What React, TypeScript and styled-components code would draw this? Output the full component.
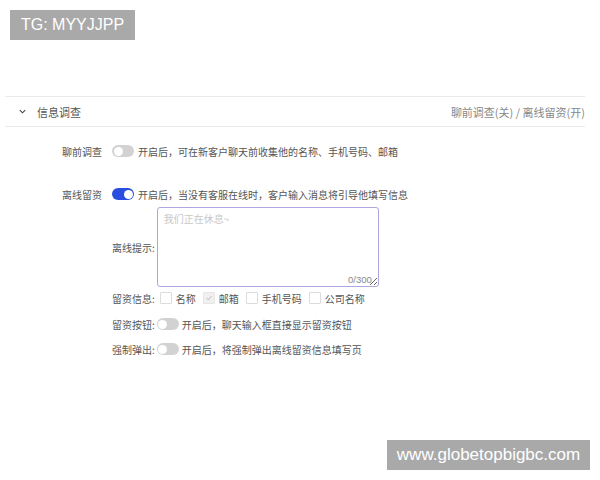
import React from 'react';
import styled, { createGlobalStyle } from 'styled-components';

const GlobalStyle = createGlobalStyle`
  html, body {
    margin: 0;
    padding: 0;
    background: #ffffff;
  }
  body {
    font-family: "Noto Sans CJK SC", "Noto Sans", sans-serif;
    color: #555;
  }
`;

const Page = styled.div`
  position: relative;
  width: 600px;
  height: 480px;
  overflow: hidden;
  padding-top: 96px;
  box-sizing: border-box;
`;

// watermark badges lie over the page
const Stamp = styled.div<{ $corner: 'top' | 'bottom' }>`
  position: absolute;
  ${(p) => (p.$corner === 'top'
    ? 'left: 10px; top: 10px; width: 125px; font-size: 16px;'
    : 'left: 387px; top: 440px; width: 203px; font-size: 17px;')}
  height: 30px;
  background: #a9a9a9;
  color: #fff;
  font-family: "Liberation Sans", Arial, sans-serif;
  line-height: 30px;
  text-align: center;
`;

const Section = styled.section`
  margin-left: 5px;
  width: 580px;
`;

const Header = styled.div`
  display: flex;
  align-items: center;
  height: 29px;
  border-top: 1px solid #ebebeb;
  border-bottom: 1px solid #ebebeb;
  padding-left: 13px;
`;

const Chevron = styled.svg`
  width: 9px;
  height: 9px;
  margin-right: 10px;
`;

const Title = styled.span`
  font-size: 11px;
  color: #555;
  flex: 1;
`;

const Summary = styled.span`
  font-size: 11px;
  color: #888;
`;

const Form = styled.div`
  padding-top: 14px;
`;

const Row = styled.div<{ $gap?: number }>`
  display: flex;
  align-items: center;
  height: 20px;
  margin-bottom: ${(p) => p.$gap ?? 0}px;
`;

const Label = styled.span`
  width: 97px;
  text-align: right;
  font-size: 10px;
  color: #555;
  margin-right: 10px;
`;

const Desc = styled.span`
  font-size: 10px;
  color: #555;
  margin-left: 4px;
`;

const Toggle = styled.span<{ $on?: boolean }>`
  position: relative;
  display: inline-block;
  width: 22px;
  height: 12px;
  border-radius: 6px;
  background: ${(p) => (p.$on ? '#2a4fe0' : '#d2d2d2')};
  flex-shrink: 0;
  &::after {
    content: '';
    position: absolute;
    top: 1.5px;
    left: ${(p) => (p.$on ? '11.5px' : '1.5px')};
    width: 9px;
    height: 9px;
    border-radius: 50%;
    background: #fff;
  }
`;

const Sub = styled.div`
  margin-left: 107px;
  margin-top: 3px;
`;

const SubRow = styled.div<{ $top: number }>`
  display: flex;
  align-items: center;
  height: 20px;
  margin-top: ${(p) => p.$top}px;
`;

const SubLabel = styled.span`
  font-size: 10px;
  color: #555;
  margin-right: 2px;
  white-space: nowrap;
`;

const TextRow = styled.div`
  display: flex;
  align-items: center;
`;

const AreaWrap = styled.div`
  position: relative;
  width: 222px;
  height: 80px;
`;

const Area = styled.textarea`
  display: block;
  width: 100%;
  height: 100%;
  box-sizing: border-box;
  border: 1px solid #aca8df;
  border-radius: 3px;
  padding: 3px 6px;
  font-family: inherit;
  font-size: 10px;
  color: #555;
  resize: both;
  outline: none;
  &::placeholder {
    color: #c8c8c8;
  }
`;

const Counter = styled.span`
  position: absolute;
  right: 7px;
  bottom: 2px;
  font-size: 9.5px;
  color: #888;
  font-family: "Liberation Sans", Arial, sans-serif;
`;

const Check = styled.span<{ $checked?: boolean }>`
  display: inline-flex;
  align-items: center;
  justify-content: center;
  width: 12px;
  height: 12px;
  box-sizing: border-box;
  border: 1px solid ${(p) => (p.$checked ? '#e6e6e6' : '#dcdcdc')};
  background: ${(p) => (p.$checked ? '#f0f0f0' : '#fff')};
  border-radius: 1px;
  margin-left: 3px;
  margin-right: 4px;
`;

const Option = styled.span`
  font-size: 10px;
  color: #555;
  margin-right: 4px;
`;

const SubDesc = styled.span`
  font-size: 10px;
  color: #555;
  margin-left: 3px;
`;

const fields = [
  { name: '名称', checked: false },
  { name: '邮箱', checked: true },
  { name: '手机号码', checked: false },
  { name: '公司名称', checked: false },
];

export default function App() {
  return (
    <>
      <GlobalStyle />
      <Page>
        <Stamp $corner="top">TG: MYYJJPP</Stamp>
        <Section>
          <Header>
            <Chevron viewBox="0 0 10 10">
              <path d="M2 3.5 L5 6.5 L8 3.5" fill="none" stroke="#444" strokeWidth="1.2" />
            </Chevron>
            <Title>信息调查</Title>
            <Summary>聊前调查(关) / 离线留资(开)</Summary>
          </Header>
          <Form>
            <Row $gap={23}>
              <Label>聊前调查</Label>
              <Toggle />
              <Desc>开启后，可在新客户聊天前收集他的名称、手机号码、邮箱</Desc>
            </Row>
            <Row>
              <Label>离线留资</Label>
              <Toggle $on />
              <Desc>开启后，当没有客服在线时，客户输入消息将引导他填写信息</Desc>
            </Row>
            <Sub>
              <TextRow>
                <SubLabel>离线提示:</SubLabel>
                <AreaWrap>
                  <Area placeholder="我们正在休息~" />
                  <Counter>0/300</Counter>
                </AreaWrap>
              </TextRow>
              <SubRow $top={1}>
                <SubLabel>留资信息:</SubLabel>
                {fields.map((f) => (
                  <React.Fragment key={f.name}>
                    <Check $checked={f.checked}>
                      {f.checked && (
                        <svg width="8" height="8" viewBox="0 0 8 8">
                          <path d="M1.5 4 L3.3 5.8 L6.5 2.2" fill="none" stroke="#bbb" strokeWidth="1" />
                        </svg>
                      )}
                    </Check>
                    <Option>{f.name}</Option>
                  </React.Fragment>
                ))}
              </SubRow>
              <SubRow $top={6}>
                <SubLabel>留资按钮:</SubLabel>
                <Toggle />
                <SubDesc>开启后，聊天输入框直接显示留资按钮</SubDesc>
              </SubRow>
              <SubRow $top={5}>
                <SubLabel>强制弹出:</SubLabel>
                <Toggle />
                <SubDesc>开启后，将强制弹出离线留资信息填写页</SubDesc>
              </SubRow>
            </Sub>
          </Form>
        </Section>
        <Stamp $corner="bottom">www.globetopbigbc.com</Stamp>
      </Page>
    </>
  );
}
